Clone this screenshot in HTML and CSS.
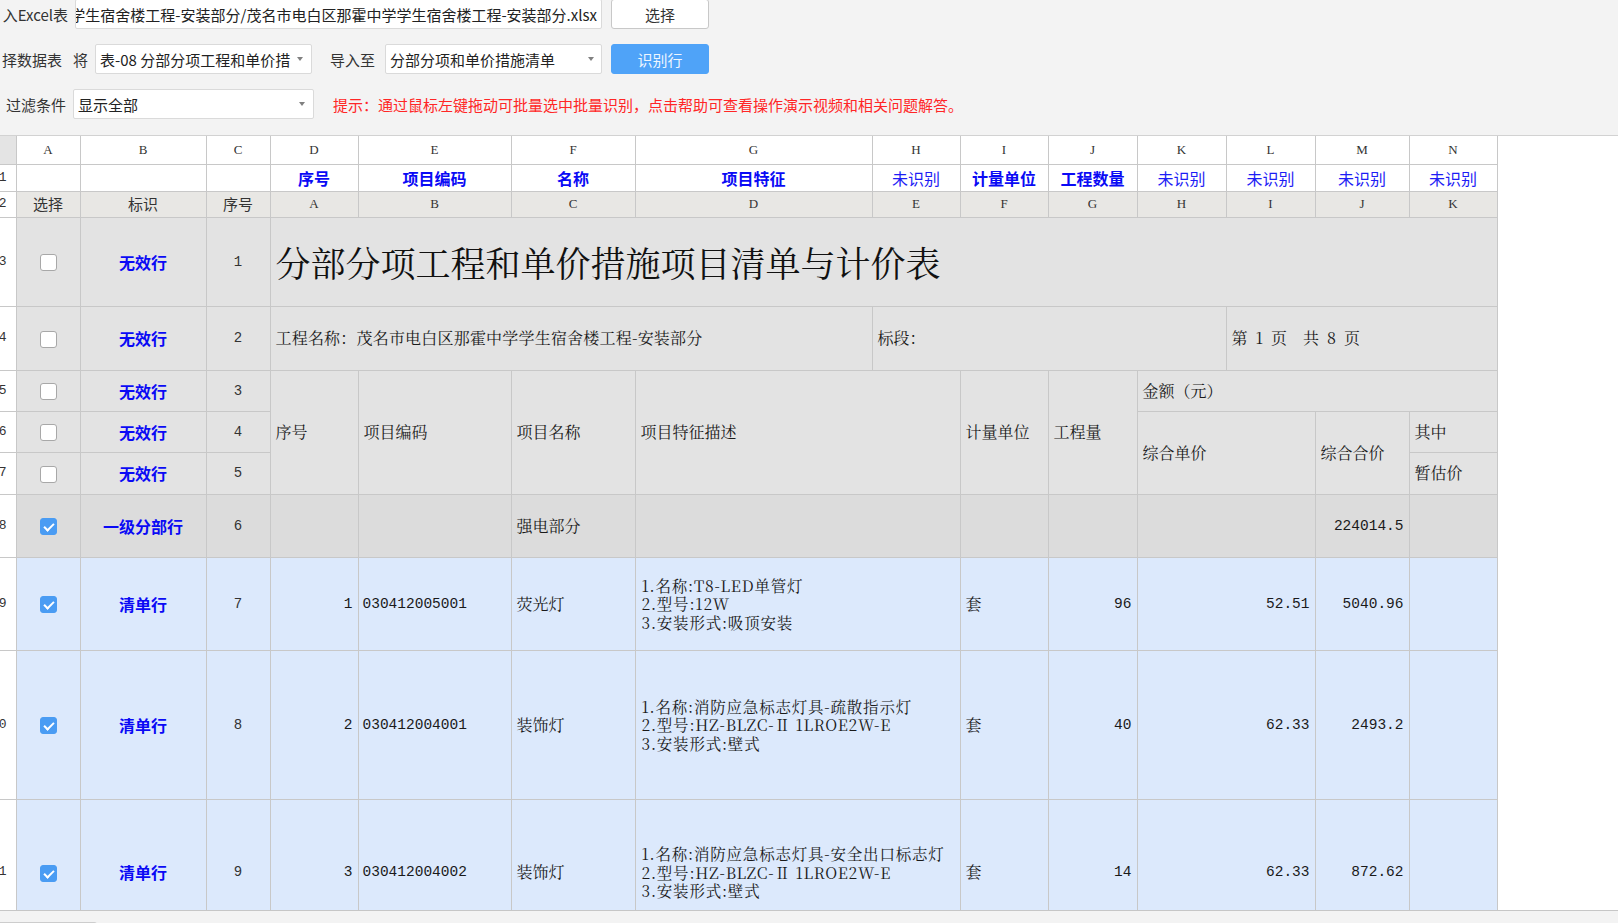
FILE: index.html
```html
<!DOCTYPE html>
<html lang="zh-CN">
<head>
<meta charset="utf-8">
<title>导入Excel表</title>
<link rel="stylesheet" href="styles.css">
</head>
<body>
<div class="toolbar">
  <div class="tb-row r1">
    <div class="lbl lbl-excel"><span>入Excel表</span></div>
    <div class="field path"><span>学生宿舍楼工程-安装部分/茂名市电白区那霍中学学生宿舍楼工程-安装部分.xlsx</span></div>
    <div class="btn">选择</div>
  </div>
  <div class="tb-row r2">
    <div class="lbl lbl-sheet"><span>择数据表</span></div>
    <span class="jiang">将</span>
    <div class="field select s1"><span class="val">表-08 分部分项工程和单价措</span><span class="arrow"></span></div>
    <span class="imp">导入至</span>
    <div class="field select s2"><span class="val">分部分项和单价措施清单</span><span class="arrow"></span></div>
    <div class="btn primary">识别行</div>
  </div>
  <div class="tb-row r3">
    <span class="filter-lbl">过滤条件</span>
    <div class="field select s3"><span class="val">显示全部</span><span class="arrow"></span></div>
    <span class="hint">提示：通过鼠标左键拖动可批量选中批量识别，点击帮助可查看操作演示视频和相关问题解答。</span>
  </div>
</div>

<div class="grid">
  <table class="sheet">
    <colgroup>
      <col class="c-rh"><col class="c-a"><col class="c-b"><col class="c-c"><col class="c-d"><col class="c-e"><col class="c-f"><col class="c-g"><col class="c-h"><col class="c-i"><col class="c-j"><col class="c-k"><col class="c-l"><col class="c-m"><col class="c-n">
    </colgroup>
    <tr class="h0 w">
      <td class="rh corner"></td>
      <td class="cl">A</td><td class="cl">B</td><td class="cl">C</td><td class="cl">D</td><td class="cl">E</td><td class="cl">F</td><td class="cl">G</td><td class="cl">H</td><td class="cl">I</td><td class="cl">J</td><td class="cl">K</td><td class="cl">L</td><td class="cl">M</td><td class="cl">N</td>
    </tr>
    <tr class="h1 w">
      <td class="rh">1</td>
      <td></td><td></td><td></td>
      <td class="hb">序号</td><td class="hb">项目编码</td><td class="hb">名称</td><td class="hb">项目特征</td><td class="hn">未识别</td><td class="hb">计量单位</td><td class="hb">工程数量</td><td class="hn">未识别</td><td class="hn">未识别</td><td class="hn">未识别</td><td class="hn">未识别</td>
    </tr>
    <tr class="h2 sub">
      <td class="rh">2</td>
      <td class="h2t">选择</td><td class="h2t">标识</td><td class="h2t">序号</td>
      <td class="cl">A</td><td class="cl">B</td><td class="cl">C</td><td class="cl">D</td><td class="cl">E</td><td class="cl">F</td><td class="cl">G</td><td class="cl">H</td><td class="cl">I</td><td class="cl">J</td><td class="cl">K</td>
    </tr>
    <tr class="h3 g">
      <td class="rh">3</td>
      <td class="ck"><span class="cb"></span></td><td class="tag">无效行</td><td class="no">1</td>
      <td class="title" colspan="11">分部分项工程和单价措施项目清单与计价表</td>
    </tr>
    <tr class="h4 g">
      <td class="rh">4</td>
      <td class="ck"><span class="cb"></span></td><td class="tag">无效行</td><td class="no">2</td>
      <td class="t wide" colspan="4">工程名称：茂名市电白区那霍中学学生宿舍楼工程-安装部分</td>
      <td class="t" colspan="4">标段：</td>
      <td class="t" colspan="3">第&ensp;1&ensp;页&ensp;&ensp;共&ensp;8&ensp;页</td>
    </tr>
    <tr class="h5 g">
      <td class="rh">5</td>
      <td class="ck"><span class="cb"></span></td><td class="tag">无效行</td><td class="no">3</td>
      <td class="t" rowspan="3">序号</td>
      <td class="t" rowspan="3">项目编码</td>
      <td class="t" rowspan="3">项目名称</td>
      <td class="t" rowspan="3" colspan="2">项目特征描述</td>
      <td class="t" rowspan="3">计量单位</td>
      <td class="t" rowspan="3">工程量</td>
      <td class="t" colspan="4">金额（元）</td>
    </tr>
    <tr class="h6 g">
      <td class="rh">6</td>
      <td class="ck"><span class="cb"></span></td><td class="tag">无效行</td><td class="no">4</td>
      <td class="t" rowspan="2" colspan="2">综合单价</td>
      <td class="t" rowspan="2">综合合价</td>
      <td class="t">其中</td>
    </tr>
    <tr class="h7 g">
      <td class="rh">7</td>
      <td class="ck"><span class="cb"></span></td><td class="tag">无效行</td><td class="no">5</td>
      <td class="t">暂估价</td>
    </tr>
    <tr class="h8 g2">
      <td class="rh">8</td>
      <td class="ck"><span class="cb on"></span></td><td class="tag">一级分部行</td><td class="no">6</td>
      <td></td><td></td><td class="t">强电部分</td><td colspan="2"></td><td></td><td></td><td colspan="2"></td><td class="num">224014.5</td><td></td>
    </tr>
    <tr class="h9 b">
      <td class="rh">9</td>
      <td class="ck"><span class="cb on"></span></td><td class="tag">清单行</td><td class="no">7</td>
      <td class="num">1</td><td class="code">030412005001</td><td class="t">荧光灯</td>
      <td class="desc" colspan="2"><div class="ln">1.名称:T8-LED单管灯</div><div class="ln">2.型号:12W</div><div class="ln">3.安装形式:吸顶安装</div></td>
      <td class="t">套</td><td class="num">96</td><td class="num" colspan="2">52.51</td><td class="num">5040.96</td><td></td>
    </tr>
    <tr class="h10 b">
      <td class="rh">10</td>
      <td class="ck"><span class="cb on"></span></td><td class="tag">清单行</td><td class="no">8</td>
      <td class="num">2</td><td class="code">030412004001</td><td class="t">装饰灯</td>
      <td class="desc" colspan="2"><div class="ln">1.名称:消防应急标志灯具-疏散指示灯</div><div class="ln">2.型号:HZ-BLZC-Ⅱ 1LROE2W-E</div><div class="ln">3.安装形式:壁式</div></td>
      <td class="t">套</td><td class="num">40</td><td class="num" colspan="2">62.33</td><td class="num">2493.2</td><td></td>
    </tr>
    <tr class="h11 b">
      <td class="rh">11</td>
      <td class="ck"><span class="cb on"></span></td><td class="tag">清单行</td><td class="no">9</td>
      <td class="num">3</td><td class="code">030412004002</td><td class="t">装饰灯</td>
      <td class="desc" colspan="2"><div class="ln">1.名称:消防应急标志灯具-安全出口标志灯</div><div class="ln">2.型号:HZ-BLZC-Ⅱ 1LROE2W-E</div><div class="ln">3.安装形式:壁式</div></td>
      <td class="t">套</td><td class="num">14</td><td class="num" colspan="2">62.33</td><td class="num">872.62</td><td></td>
    </tr>
  </table>
</div>
<div class="hbar"><div class="thumb"></div></div>
</body>
</html>
```

FILE: styles.css
```css
* { box-sizing: border-box; }
html, body { margin: 0; padding: 0; }
body {
  width: 1618px;
  height: 923px;
  overflow: hidden;
  background: #f3f3f3;
  font-family: "Noto Sans CJK SC", "Noto Sans", sans-serif;
  color: #333;
}

/* ---------- toolbar ---------- */
.toolbar { height: 135px; overflow: hidden; }
.tb-row {
  display: flex;
  align-items: center;
  height: 30px;
  font-size: 15px;
  white-space: nowrap;
}
.r1 { margin-top: -1px; }
.r2, .r3 { margin-top: 15px; }

.lbl { display: flex; justify-content: flex-end; overflow: hidden; flex-shrink: 0; }
.lbl span { flex-shrink: 0; }
.lbl-excel { width: 75px; padding-right: 7px; }
.lbl-sheet { width: 66px; padding-right: 4px; }

.field {
  background: #fff;
  border: 1px solid #dadada;
  border-radius: 2px;
  height: 30px;
  display: flex;
  align-items: center;
  overflow: hidden;
  flex-shrink: 0;
  color: #222;
}
.path { width: 527px; justify-content: flex-end; padding-right: 4px; }
.path span { flex-shrink: 0; }

.btn {
  width: 98px;
  height: 30px;
  margin-left: 9px;
  background: #fff;
  border: 1px solid #c8c8c8;
  border-radius: 3px;
  display: flex;
  align-items: center;
  justify-content: center;
  color: #333;
  flex-shrink: 0;
}
.btn.primary { background: #4fa3f8; border-color: #4fa3f8; color: #eef6ff; }

.jiang { margin-left: 7px; }
.select { padding-left: 4px; padding-right: 8px; }
.select .val { flex: 1; overflow: hidden; }
.arrow {
  width: 0; height: 0;
  border-left: 3px solid transparent;
  border-right: 3px solid transparent;
  border-top: 4px solid #808080;
  flex-shrink: 0;
  margin-left: 6px;
}
.s1 { width: 217px; margin-left: 7px; }
.imp { margin-left: 18px; }
.s2 { width: 217px; margin-left: 10px; padding-right: 7px; }
.filter-lbl { margin-left: 6px; }
.s3 { width: 241px; margin-left: 7px; }
.hint { margin-left: 19px; color: #ff2626; }

/* ---------- grid ---------- */
.grid {
  height: 776px;
  background: #fff;
  border-top: 1px solid #d2d2d2;
  border-bottom: 1px solid #c6c6c6;
  overflow: hidden;
}
.sheet {
  border-collapse: collapse;
  table-layout: fixed;
  width: 1497px;
}
.c-rh { width: 16px; }
.c-a { width: 64px; }
.c-b { width: 126px; }
.c-c { width: 64px; }
.c-d { width: 88px; }
.c-e { width: 153px; }
.c-f { width: 124px; }
.c-g { width: 237px; }
.c-h { width: 88px; }
.c-i { width: 88px; }
.c-j { width: 89px; }
.c-k { width: 89px; }
.c-l { width: 89px; }
.c-m { width: 94px; }
.c-n { width: 88px; }

.sheet td {
  border: 1px solid #c8c8c8;
  padding: 0 5px;
  overflow: hidden;
  white-space: nowrap;
  font-size: 16px;
  line-height: 18px;
  color: #1a1a1a;
  font-family: "Noto Serif CJK SC", "Noto Sans CJK SC", serif;
}
.sheet tr:first-child td { border-top: none; }
.sheet td.rh { border-left: none; }

.h0 { height: 28px; }
.h1 { height: 27px; }
.h2 { height: 26px; }
.h3 { height: 89px; }
.h4 { height: 64px; }
.h5 { height: 41px; }
.h6 { height: 41px; }
.h7 { height: 42px; }
.h8 { height: 63px; }
.h9 { height: 93px; }
.h10 { height: 149px; }
.h11 { height: 146px; }

.w td { background: #fff; }
.sub td { background: #e8e7e4; }
.g td { background: #e3e3e3; }
.g2 td { background: #dcdcdc; }
.b td { background: #dce9fc; }
.sheet td.rh { background: #fff; }
.sheet td.corner { background: #e4e4e4; }

.sheet td.rh {
  direction: rtl;
  text-align: right;
  padding: 0 9px 0 0;
  font-family: "Liberation Mono", monospace;
  font-size: 13px;
  color: #333;
}
.sheet td.cl {
  text-align: center;
  font-family: "Liberation Serif", serif;
  font-size: 13px;
  color: #333;
}
.sheet td.hb {
  text-align: center;
  font-family: "Noto Sans CJK SC", sans-serif;
  font-weight: 700;
  font-size: 16px;
  color: #0a0af5;
}
.sheet td.hn {
  text-align: center;
  font-family: "Noto Sans CJK SC", sans-serif;
  font-size: 16px;
  color: #1d1df5;
}
.sheet td.h2t {
  text-align: center;
  font-family: "Noto Sans CJK SC", sans-serif;
  font-size: 15px;
  color: #333;
}
.sheet td.ck { text-align: center; padding: 0; }
.sheet td.tag {
  text-align: center;
  font-family: "Noto Sans CJK SC", sans-serif;
  font-weight: 700;
  font-size: 16px;
  color: #0a0af5;
}
.sheet td.no {
  text-align: center;
  font-family: "Liberation Mono", monospace;
  font-size: 14px;
  color: #333;
}
.sheet td.title {
  font-size: 35px;
  line-height: 40px;
  color: #111;
}
.sheet td.num {
  text-align: right;
  font-family: "Liberation Mono", monospace;
  font-size: 14.5px;
}
.sheet td.code {
  padding-left: 4px;
  font-family: "Liberation Mono", monospace;
  font-size: 14.5px;
}
.sheet td.wide { letter-spacing: 0.2px; }
.sheet td.desc {
  padding-left: 6px;
  font-size: 15.5px;
  letter-spacing: 0.8px;
}
.desc .ln { height: 18.5px; line-height: 18.5px; }

.cb {
  display: inline-block;
  width: 17px;
  height: 17px;
  border: 1px solid #a8a8a8;
  border-radius: 3px;
  background: #fff;
  vertical-align: middle;
  position: relative;
}
.cb.on { background: #4a9cf3; border-color: #4a9cf3; }
.cb.on::after {
  content: "";
  position: absolute;
  left: 5px;
  top: 2px;
  width: 4px;
  height: 8px;
  border: solid #fff;
  border-width: 0 2px 2px 0;
  transform: rotate(45deg);
}

.hbar { height: 12px; overflow: hidden; }
.thumb {
  margin-top: 11px;
  width: 97px;
  height: 4px;
  border-top: 1px solid #cdcdcd;
  border-right: 1px solid #cdcdcd;
  border-radius: 0 3px 0 0;
  background: #ececec;
}
```
